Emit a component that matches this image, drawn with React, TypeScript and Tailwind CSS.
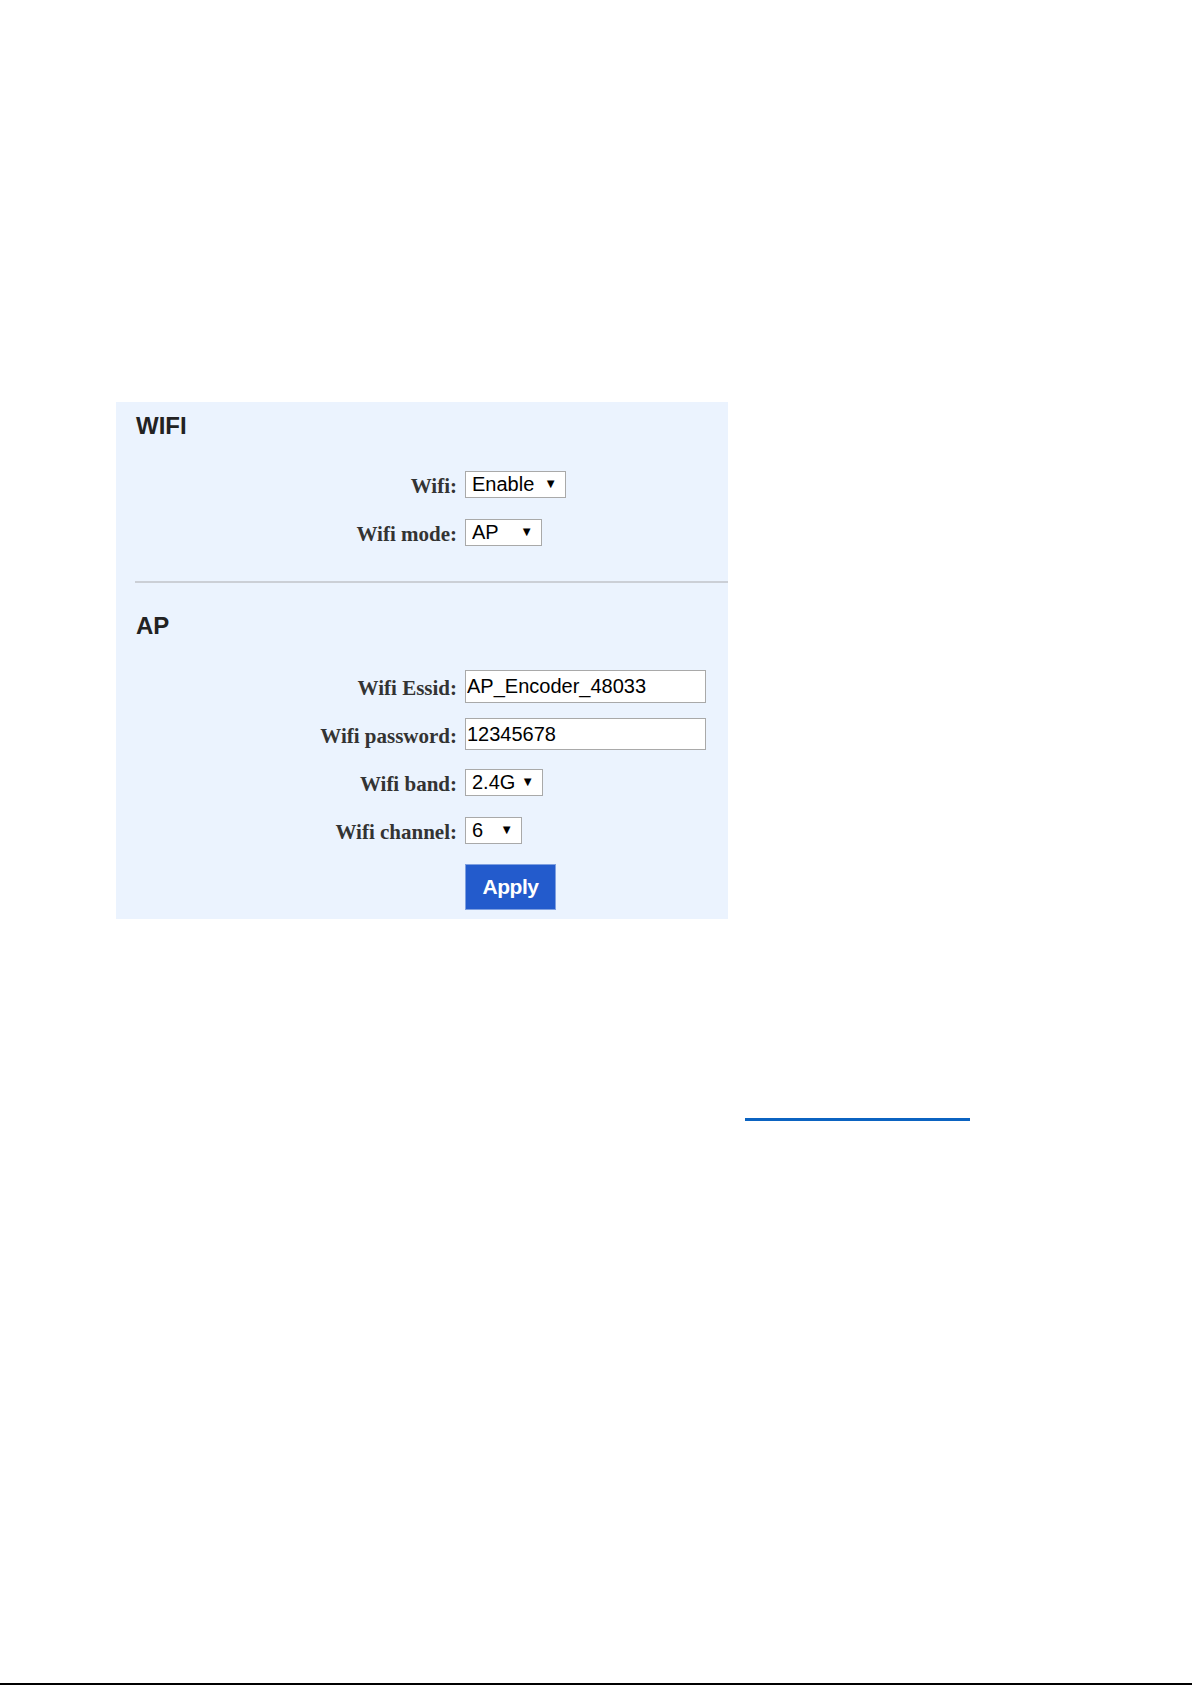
import { useState } from "react";

const serif = "font-['Liberation_Serif','Times_New_Roman',serif]";
const sans = "font-['Liberation_Sans',Arial,sans-serif]";

type SelectProps = {
  value: string;
  options: string[];
  width: string;
  onChange: (v: string) => void;
};

function FakeSelect({ value, options, width, onChange }: SelectProps) {
  return (
    <div className={`relative h-[27px] ${width}`}>
      <select
        value={value}
        onChange={(e) => onChange(e.target.value)}
        className={`appearance-none w-full h-full bg-white border border-[#a9a9a9] pl-[6px] pr-[20px] text-[20px] leading-none text-black outline-none ${sans}`}
      >
        {options.map((o) => (
          <option key={o} value={o}>
            {o}
          </option>
        ))}
      </select>
      <span className="absolute right-[9px] top-[6px] text-[13px] leading-none text-black pointer-events-none">
        ▼
      </span>
    </div>
  );
}

function Row({ label, children }: { label: string; children: React.ReactNode }) {
  return (
    <div className="h-[48px] flex items-center">
      <label
        className={`w-[341px] pt-[5px] text-right text-[21px] font-bold text-[#333] ${serif}`}
      >
        {label}
      </label>
      <div className="ml-[8px]">{children}</div>
    </div>
  );
}

export default function App() {
  const [wifi, setWifi] = useState("Enable");
  const [mode, setMode] = useState("AP");
  const [essid, setEssid] = useState("AP_Encoder_48033");
  const [pass, setPass] = useState("12345678");
  const [band, setBand] = useState("2.4G");
  const [channel, setChannel] = useState("6");

  return (
    <div className="w-[1192px] h-[1685px] bg-white flex flex-col">
      <div className="mt-[402px] ml-[116px] w-[612px] bg-[#ebf3fe] flex flex-col pt-[12px] pb-[9px]">
        <h2 className={`pl-[20px] text-[24px] leading-6 font-bold text-[#222] ${sans}`}>
          WIFI
        </h2>
        <div className="mt-[22px]">
          <Row label="Wifi:">
            <FakeSelect
              value={wifi}
              options={["Enable", "Disable"]}
              width="w-[101px]"
              onChange={setWifi}
            />
          </Row>
          <Row label="Wifi mode:">
            <FakeSelect
              value={mode}
              options={["AP", "STA"]}
              width="w-[77px]"
              onChange={setMode}
            />
          </Row>
        </div>

        <div className="mt-[25px] ml-[19px] h-[2px] bg-[#cbcfd6]" />

        <h2 className={`mt-[31px] pl-[20px] text-[24px] leading-6 font-bold text-[#222] ${sans}`}>
          AP
        </h2>
        <div className="mt-[24px]">
          <Row label="Wifi Essid:">
            <input
              value={essid}
              onChange={(e) => setEssid(e.target.value)}
              className={`w-[241px] h-[33px] bg-white border border-[#a9a9a9] pl-[1px] text-[20px] text-black outline-none ${sans}`}
            />
          </Row>
          <Row label="Wifi password:">
            <input
              value={pass}
              onChange={(e) => setPass(e.target.value)}
              className={`w-[241px] h-[32px] bg-white border border-[#a9a9a9] pl-[1px] text-[20px] text-black outline-none ${sans}`}
            />
          </Row>
          <Row label="Wifi band:">
            <FakeSelect
              value={band}
              options={["2.4G", "5G"]}
              width="w-[78px]"
              onChange={setBand}
            />
          </Row>
          <Row label="Wifi channel:">
            <FakeSelect
              value={channel}
              options={["1", "6", "11"]}
              width="w-[57px]"
              onChange={setChannel}
            />
          </Row>
        </div>
        <div className="mt-[10px] ml-[349px]">
          <button
            className={`w-[91px] h-[46px] bg-[#235bcc] border border-[#7fa0e0] text-white text-[21px] font-bold tracking-[-0.5px] ${sans}`}
          >
            Apply
          </button>
        </div>
      </div>

      <div className="mt-[199px] ml-[745px] w-[225px] h-[3px] bg-[#0b63c1]" />

      <div className="mt-auto h-[2px] bg-black" />
    </div>
  );
}
